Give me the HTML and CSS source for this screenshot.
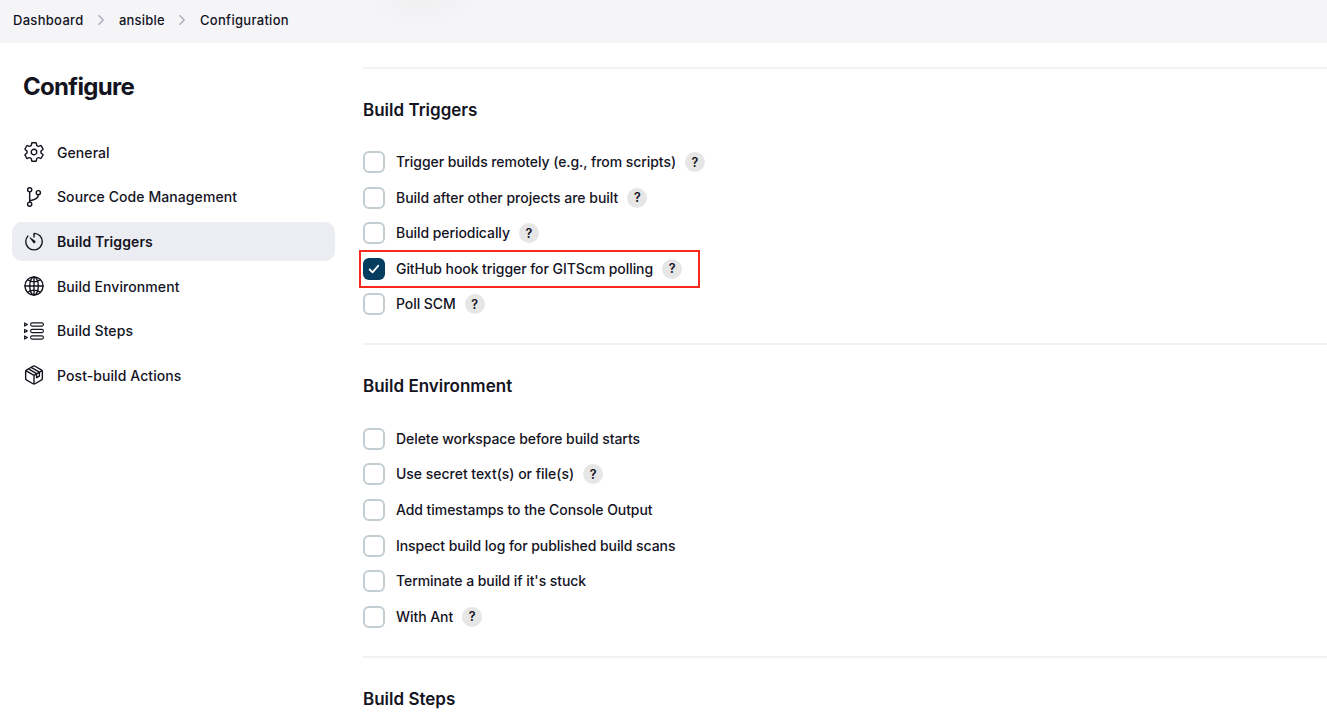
FILE: index.html
```html
<!DOCTYPE html>
<html lang="en">
<head>
<meta charset="utf-8">
<title>ansible Config</title>
<link rel="stylesheet" href="styles.css">
</head>
<body>
<header class="breadcrumbs">
  <a class="crumb crumb-dashboard">Dashboard</a>
  <svg class="chevron" viewBox="0 0 8 12"><path d="M1.5 1.2 6.2 6 1.5 10.8"/></svg>
  <a class="crumb crumb-project">ansible</a>
  <svg class="chevron" viewBox="0 0 8 12"><path d="M1.5 1.2 6.2 6 1.5 10.8"/></svg>
  <a class="crumb crumb-page">Configuration</a>
</header>
<div class="page">
  <aside class="side-panel">
    <h1 class="title">Configure</h1>
    <nav class="tasks">
      <a class="task"><svg class="icon" viewBox="26 26 460 460"><path d="M262.29 192.31a64 64 0 1057.4 57.4 64.13 64.13 0 00-57.4-57.4zM416.39 256a154.34 154.34 0 01-1.53 20.79l45.21 35.46a10.81 10.81 0 012.45 13.75l-42.77 74a10.81 10.81 0 01-13.14 4.59l-44.9-18.08a16.11 16.11 0 00-15.17 1.75A164.48 164.48 0 01325 400.8a15.94 15.94 0 00-8.82 12.14l-6.73 47.89a11.08 11.08 0 01-10.68 9.17h-85.54a11.11 11.11 0 01-10.69-8.87l-6.72-47.82a16.07 16.07 0 00-9-12.22 155.3 155.3 0 01-21.46-12.57 16 16 0 00-15.11-1.71l-44.89 18.07a10.81 10.81 0 01-13.14-4.58l-42.77-74a10.8 10.8 0 012.45-13.75l38.21-30a16.05 16.05 0 006-14.08c-.36-4.17-.58-8.33-.58-12.5s.21-8.27.58-12.35a16 16 0 00-6.07-13.94l-38.19-30A10.81 10.81 0 0149.48 186l42.77-74a10.81 10.81 0 0113.14-4.59l44.9 18.08a16.11 16.11 0 0015.17-1.75A164.48 164.48 0 01187 111.2a15.94 15.94 0 008.82-12.14l6.73-47.89A11.08 11.08 0 01213.23 42h85.54a11.11 11.11 0 0110.69 8.87l6.72 47.82a16.07 16.07 0 009 12.22 155.3 155.3 0 0121.46 12.57 16 16 0 0015.11 1.71l44.89-18.07a10.81 10.81 0 0113.14 4.58l42.77 74a10.8 10.8 0 01-2.45 13.75l-38.21 30a16.05 16.05 0 00-6.05 14.08c.33 4.14.55 8.3.55 12.47z"/></svg><span>General</span></a>
      <a class="task"><svg class="icon" viewBox="34 34 444 444"><circle cx="160" cy="96" r="46"/><circle cx="160" cy="416" r="46"/><circle cx="352" cy="160" r="46"/><path d="M160 368V144M352 208c0 110-110 100-192 134"/></svg><span class="task-text-raised">Source Code Management</span></a>
      <a class="task task-active"><svg class="icon" viewBox="24 10 464 464"><path d="M112.91 128A191.85 191.85 0 0064 254c-1.18 106.35 85.65 193.8 192 194 106.2.2 192-85.83 192-192 0-104.54-83.55-189.61-187.5-192a4.36 4.36 0 00-4.5 4.37V152"/><path class="hand" d="M233.38 278.63l-79-113a8.13 8.13 0 0111.32-11.32l113 79a32.5 32.5 0 01-37.25 53.26 33.21 33.21 0 01-8.07-7.94z"/></svg><span>Build Triggers</span></a>
      <a class="task"><svg class="icon" viewBox="26 26 460 460"><circle cx="256" cy="256" r="208"/><ellipse cx="256" cy="256" rx="99" ry="208"/><path d="M256 48v416M48 256h416M117 117c38 27 86 44 139 44s101-17 139-44M117 395c38-27 86-44 139-44s101 17 139 44"/></svg><span>Build Environment</span></a>
      <a class="task"><svg class="icon icon-steps" viewBox="0 0 20 20"><rect x="6.6" y="1.9" width="12.8" height="3.2" rx="1.5"/><rect x="6.6" y="8.4" width="12.8" height="3.2" rx="1.5"/><rect x="6.6" y="14.9" width="12.8" height="3.2" rx="1.5"/><path d="M.6 1.9v3.2l2.8-1.6zM.6 8.4v3.2L3.4 10zM.6 14.9v3.2l2.8-1.6z"/></svg><span>Build Steps</span></a>
      <a class="task"><svg class="icon" viewBox="26 26 460 460"><path d="M448 341.37V170.61A32 32 0 00432.11 143l-152-88.46a47.94 47.94 0 00-48.24 0L79.89 143A32 32 0 0064 170.61v170.76A32 32 0 0079.89 369l152 88.46a48 48 0 0048.24 0l152-88.46A32 32 0 00448 341.37zM69 153.99l187 110 187-110M256 463.99v-200M127 115l189 111v92l64-37v-92L190 79"/></svg><span>Post-build Actions</span></a>
    </nav>
  </aside>
  <main class="content">
    <section class="section section-triggers">
      <h2 class="heading">Build Triggers</h2>
      <div class="options">
        <div class="option"><span class="box"></span><span class="label">Trigger builds remotely (e.g., from scripts)</span><span class="help">?</span></div>
        <div class="option"><span class="box"></span><span class="label label-wide">Build after other projects are built</span><span class="help">?</span></div>
        <div class="option"><span class="box"></span><span class="label">Build periodically</span><span class="help">?</span></div>
        <div class="option marked"><span class="box box-checked"><svg viewBox="0 0 22 22"><path d="M6.7 11.5 9.5 14.3 15.2 7.8"/></svg></span><span class="label">GitHub hook trigger for GITScm polling</span><span class="help">?</span></div>
        <div class="option"><span class="box"></span><span class="label">Poll SCM</span><span class="help">?</span></div>
      </div>
    </section>
    <section class="section section-environment">
      <h2 class="heading">Build Environment</h2>
      <div class="options">
        <div class="option"><span class="box"></span><span class="label">Delete workspace before build starts</span></div>
        <div class="option"><span class="box"></span><span class="label label-wide">Use secret text(s) or file(s)</span><span class="help">?</span></div>
        <div class="option"><span class="box"></span><span class="label">Add timestamps to the Console Output</span></div>
        <div class="option"><span class="box"></span><span class="label">Inspect build log for published build scans</span></div>
        <div class="option"><span class="box"></span><span class="label">Terminate a build if it's stuck</span></div>
        <div class="option"><span class="box"></span><span class="label">With Ant</span><span class="help">?</span></div>
      </div>
    </section>
    <section class="section section-steps">
      <h2 class="heading">Build Steps</h2>
    </section>
  </main>
</div>
</body>
</html>
```
FILE: styles.css
```css
*, *::after { box-sizing: border-box; }
body {
  margin: 0;
  height: 728px;
  overflow: hidden;
  background: #fff;
  color: #14141f;
  font-family: Inter, "Liberation Sans", sans-serif;
  font-size: 14px;
  font-weight: 500;
}
.breadcrumbs {
  display: flex;
  align-items: center;
  height: 43px;
  padding: 0 13px 3px;
  font-size: 13px;
  letter-spacing: .3px;
  background: radial-gradient(ellipse 56px 28px at 422px 0, #f0f0f1, #f5f5f8) #f5f5f8;
}
.crumb { white-space: nowrap; }
.crumb-dashboard { width: 71px; }
.crumb-project { width: 46px; letter-spacing: .2px; }
.chevron {
  width: 8px;
  height: 12px;
  margin: 0 14px 0 13px;
  fill: none;
  stroke: #a9a9b8;
  stroke-width: 1.3;
}
.page { display: flex; }
.side-panel { width: 363px; padding: 29px 28px 0 12px; }
.title {
  margin: 0 0 31px 11px;
  font-size: 24px;
  line-height: 30px;
  font-weight: 700;
  letter-spacing: -.68px;
}
.tasks { display: flex; flex-direction: column; gap: 5.6px; }
.task {
  display: flex;
  align-items: center;
  gap: 13px;
  height: 39px;
  padding: 0 12px;
  border-radius: 10px;
  white-space: nowrap;
  letter-spacing: .08px;
}
.task-active { background: #ecedf3; font-weight: 600; letter-spacing: .12px; }
.task-text-raised { margin-bottom: 1px; }
.icon {
  width: 20px;
  height: 20px;
  margin-top: -1px;
  overflow: visible;
  fill: none;
  stroke: currentColor;
  stroke-width: 32;
  stroke-linecap: round;
  stroke-linejoin: round;
}
.icon-steps { stroke-width: 1.1; margin-top: 0; }
.hand { fill: currentColor; stroke: none; }
.content { flex: 1; padding-top: 24px; }
.section { border-top: 2px solid #f1f1f6; padding-top: 30px; }
.section-triggers { height: 276px; }
.section-environment { height: 313px; }
.heading {
  margin: 0 0 30px;
  font-size: 17px;
  line-height: 22px;
  font-weight: 600;
}
.section-environment .heading { margin-bottom: 30.8px; }
.options { display: flex; flex-direction: column; gap: 13.6px; }
.option { display: flex; align-items: center; position: relative; height: 22px; }
.box {
  width: 22px;
  height: 22px;
  margin-right: 11px;
  border: 2px solid #c3cdd2;
  border-radius: 6px;
}
.box-checked { border: 0; background: #043d5f; }
.box-checked svg { display: block; fill: none; stroke: #fff; stroke-width: 1.8; stroke-linecap: round; stroke-linejoin: round; }
.label { margin-bottom: 1px; white-space: nowrap; letter-spacing: -.065px; }
.label-wide { letter-spacing: -.02px; }
.help {
  display: flex;
  align-items: center;
  justify-content: center;
  width: 20px;
  height: 20px;
  margin-left: 9px;
  border-radius: 50%;
  background: #e6e6e6;
  font-size: 12.5px;
  font-weight: 600;
}
/* Callout frame around the selected trigger */
.marked::after {
  content: "";
  position: absolute;
  left: -4px;
  top: -8px;
  width: 341px;
  height: 38px;
  border: 2px solid #f9281d;
}
```
